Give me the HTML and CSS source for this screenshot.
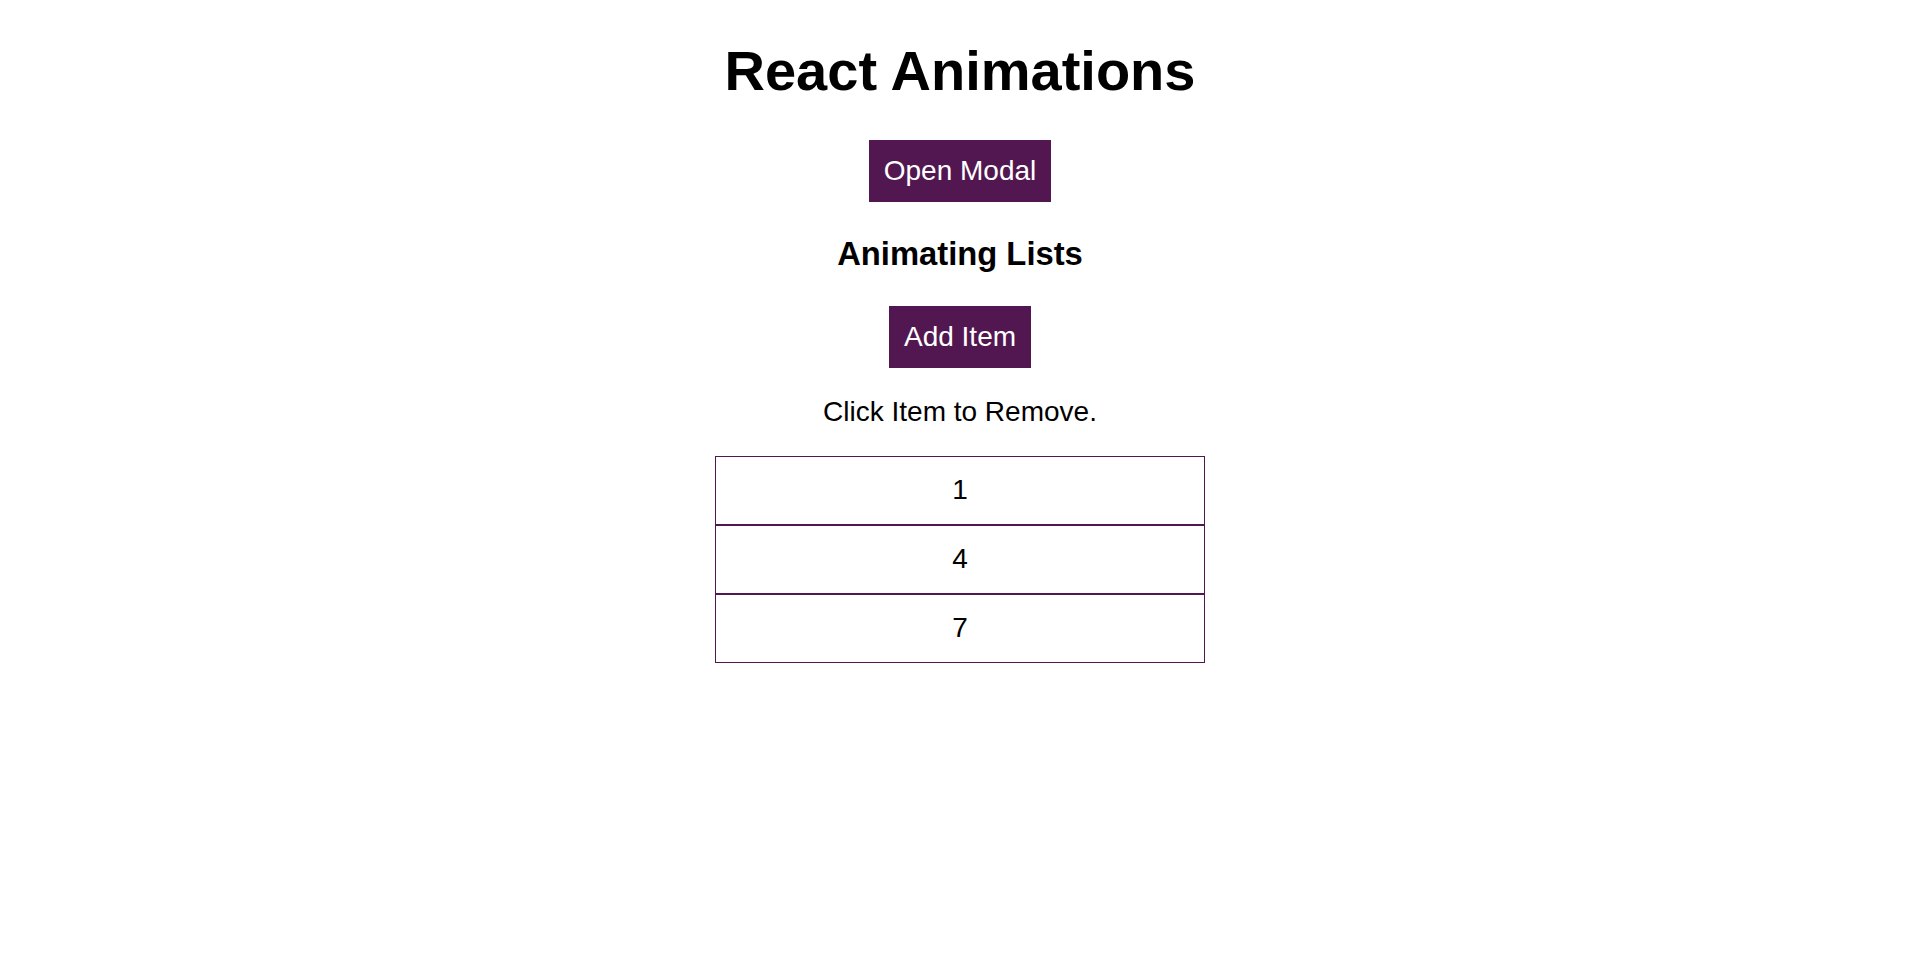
FILE: index.html
```html
<!DOCTYPE html>
<html lang="en">
<head>
    <meta charset="UTF-8">
    <meta name="viewport" content="width=device-width, initial-scale=1.0">
    <title>React Animations</title>
    <link rel="stylesheet" href="styles.css">
</head>
<body>
    <div class="app">
        <h1>React Animations</h1>
        <div class="actions">
            <button class="button">Open Modal</button>
        </div>

        <h3>Animating Lists</h3>
        <div class="actions">
            <button class="button">Add Item</button>
        </div>
        <p>Click Item to Remove.</p>

        <ul class="list">
            <li class="list-item">1</li>
            <li class="list-item">4</li>
            <li class="list-item">7</li>
        </ul>
    </div>
</body>
</html>
```

FILE: styles.css
```css
body {
    margin: 0;
    font-family: 'Liberation Sans', Arial, sans-serif;
    font-size: 28px;
    color: #000;
    background: #fff;
}

.app {
    text-align: center;
}

h1 {
    font-size: 56px;
    margin: 37.5px 0;
}

h3 {
    font-size: 32.76px;
    margin: 32.76px 0;
}

p {
    margin: 28px 0;
}

.actions {
    display: flex;
    justify-content: center;
}

.button {
    background-color: #521751;
    border: 1px solid #521751;
    color: #fff;
    font: inherit;
    padding: 14px;
    cursor: pointer;
}

.list {
    list-style: none;
    margin: 28px auto;
    padding: 0;
    width: 490px;
}

.list-item {
    border: 1px solid #521751;
    padding: 17.5px;
    cursor: pointer;
}
```
